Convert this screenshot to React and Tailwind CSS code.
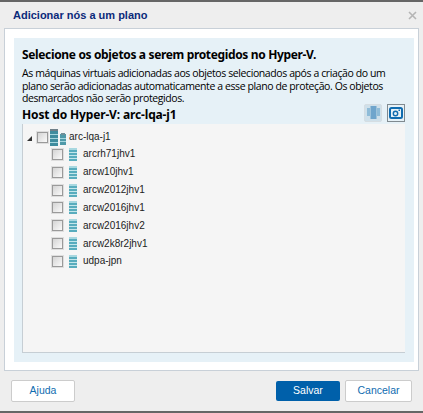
import React from 'react';

const vms = ['arcrh71jhv1', 'arcw10jhv1', 'arcw2012jhv1', 'arcw2016jhv1', 'arcw2016jhv2', 'arcw2k8r2jhv1', 'udpa-jpn'];

function Check() {
  return <span className="block w-[11px] h-[11px] shrink-0 border border-[#9a9a9a] bg-gradient-to-br from-[#d4d4d4] to-[#fafafa] shadow-[0_0_0_1px_#dedede]" />;
}

function ServerIcon({ className }) {
  return (
    <svg className={className} viewBox="0 0 8 13">
      <rect width="8" height="13" fill="#58acbd" />
      <rect y="0" width="8" height="2" fill="#a8d8e0" />
      <rect y="4" width="8" height="1" fill="#c4e6ea" />
      <rect y="7" width="8" height="1" fill="#c4e6ea" />
      <rect y="10" width="8" height="1" fill="#c4e6ea" />
    </svg>
  );
}

function HostIcon() {
  return (
    <svg className="w-[16px] h-[17px] shrink-0" viewBox="0 0 16 17">
      <rect width="8" height="17" fill="#3f8c9e" />
      <rect width="8" height="2" fill="#6f7f88" />
      <rect y="5" width="8" height="1" fill="#a5d6de" />
      <rect y="9" width="8" height="1" fill="#a5d6de" />
      <rect y="13" width="8" height="1" fill="#a5d6de" />
      <rect x="10" y="5" width="6" height="11" fill="#4f99a8" />
      <rect x="11" y="4" width="4" height="2" fill="#6f8f98" />
      <rect x="10" y="9" width="6" height="1" fill="#a5d6de" />
      <rect x="10" y="12" width="6" height="1" fill="#a5d6de" />
    </svg>
  );
}

export default function App() {
  return (
    <div className="w-[423px] h-[413px] bg-[#eeeeee] flex flex-col font-['Liberation_Sans',sans-serif] border-t-2 border-b-2 border-[#666666] overflow-hidden">
      <div className="h-[26px] flex items-center justify-between pl-[13px] pr-[6px] shrink-0">
        <span className="text-[11px] font-bold text-[#0b2a7a] leading-none">Adicionar nós a um plano</span>
        <svg className="w-[9px] h-[9px]" viewBox="0 0 9 9">
          <path d="M1 1l7 7M8 1l-7 7" stroke="#b5b5b5" strokeWidth="1.6" />
        </svg>
      </div>

      <div className="ml-[4px] mr-[4px] h-[343px] bg-white border border-[#c8d0d8] pl-[9px] pr-[4px] pt-[9px] pb-[8px] shrink-0">
        <div className="h-full bg-[#e6f1f7] flex flex-col pl-[8px] pr-[9px] pt-[10px] pb-[9px] font-['Noto_Sans',sans-serif] text-black">
          <h2 className="text-[12px] font-bold leading-[14px] tracking-[-0.35px] whitespace-nowrap">Selecione os objetos a serem protegidos no Hyper-V.</h2>
          <p className="mt-[5px] text-[10.5px] leading-[12.5px] tracking-[-0.4px] w-[368px] font-['Open_Sans',sans-serif]">
            As máquinas virtuais adicionadas aos objetos selecionados após a criação do um plano serão adicionadas automaticamente a esse plano de proteção. Os objetos desmarcados não serão protegidos.
          </p>
          <div className="flex items-end justify-between h-[19px]">
            <h3 className="text-[12px] font-bold leading-[14px] tracking-[-0.15px] whitespace-nowrap mb-[2px]">Host do Hyper-V: arc-lqa-j1</h3>
            <div className="flex gap-[5px] mb-[2px]">
              <span className="w-[18px] h-[18px] bg-[#cfe0ea] border border-[#d5dde2] rounded-[2px] flex items-center justify-center">
                <svg className="w-[13px] h-[13px]" viewBox="0 0 13 13">
                  <rect x="0" y="2" width="3" height="8" fill="#8fbcd8" />
                  <rect x="10" y="2" width="3" height="8" fill="#8fbcd8" />
                  <rect x="3.5" y="0" width="6" height="13" fill="#6fa5cc" />
                </svg>
              </span>
              <span className="w-[18px] h-[18px] bg-[#e6f1f7] border border-[#808a90] flex items-center justify-center">
                <svg className="w-[14px] h-[12px]" viewBox="0 0 14 12">
                  <rect x="1" y="1" width="12" height="10" rx="1.5" fill="none" stroke="#0f6cb0" strokeWidth="2" />
                  <circle cx="6.5" cy="6.5" r="2.2" fill="none" stroke="#0f6cb0" strokeWidth="1.4" />
                  <rect x="9.5" y="2.5" width="1.5" height="1.5" fill="#0f6cb0" />
                </svg>
              </span>
            </div>
          </div>

          <div className="flex-1 bg-[#f5f5f5] border-l border-b border-[#c6ced4] pl-[4px] pt-[5px] text-[10px] leading-none font-['Liberation_Sans',sans-serif] text-[#222222]">
            <div className="flex items-center h-[17px]">
              <span className="w-0 h-0 mr-[5px] mt-[3px] border-l-[5px] border-b-[5px] border-l-transparent border-b-[#333333]" />
              <Check />
              <span className="ml-[2px]"><HostIcon /></span>
              <span className="ml-[3px]">arc-lqa-j1</span>
            </div>
            <div className="flex flex-col">
              {vms.map((vm) => (
                <div key={vm} className="flex items-center h-[17.83px] pl-[25px]">
                  <Check />
                  <ServerIcon className="w-[8px] h-[13px] ml-[6px] shrink-0" />
                  <span className="ml-[6px]">{vm}</span>
                </div>
              ))}
            </div>
          </div>
        </div>
      </div>

      <div className="flex-1 flex items-start justify-between pl-[11px] pr-[11px] pt-[9px] text-[10.5px] font-['Liberation_Sans',sans-serif]">
        <button className="w-[64px] h-[22px] bg-white border border-[#cccccc] rounded-[2px] text-[#0f6cb0]">Ajuda</button>
        <div className="flex items-center gap-[5px]">
          <button className="w-[64px] h-[20px] bg-[#0060aa] rounded-[2px] text-white">Salvar</button>
          <button className="w-[67px] h-[22px] bg-white border border-[#cccccc] rounded-[2px] text-[#0f6cb0]">Cancelar</button>
        </div>
      </div>
    </div>
  );
}
